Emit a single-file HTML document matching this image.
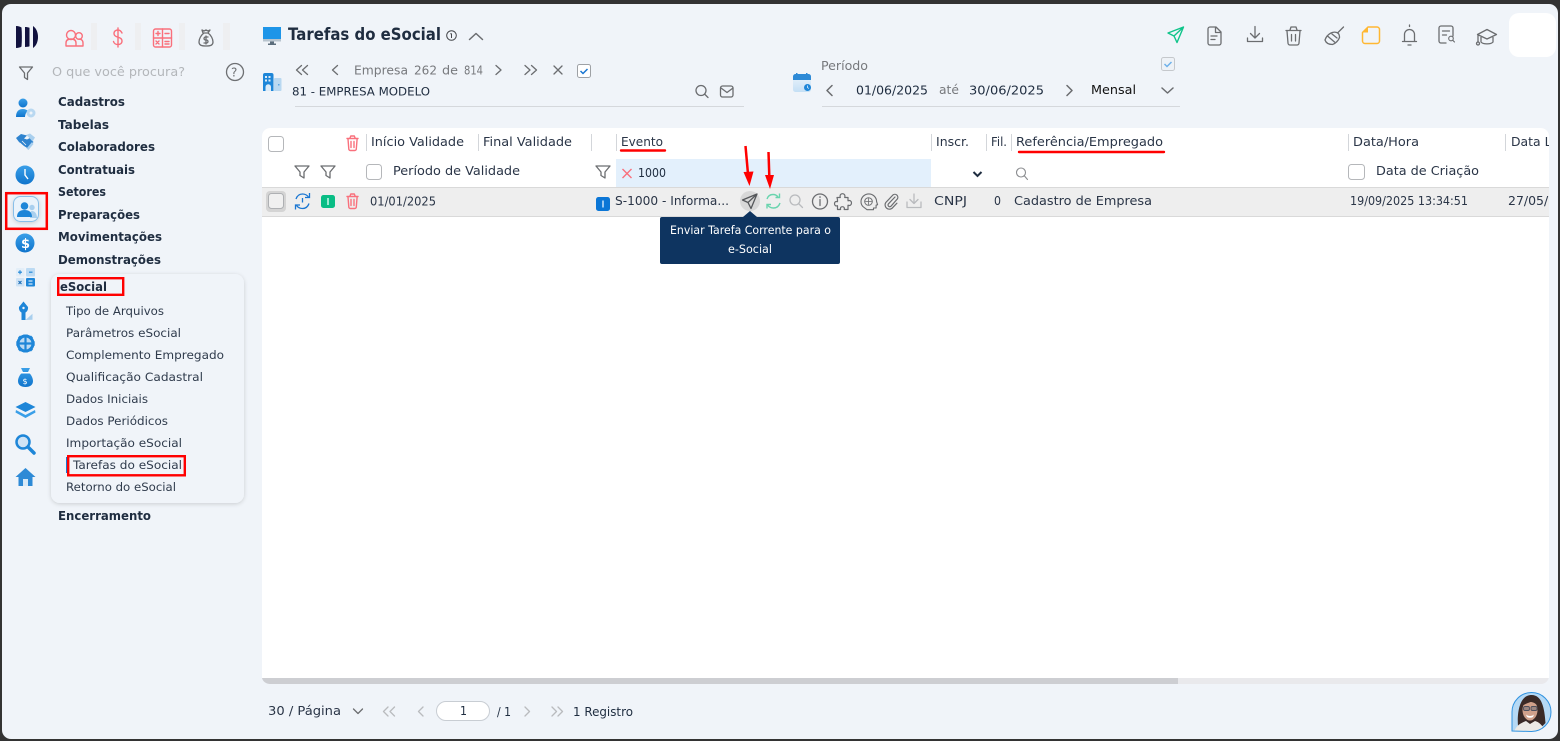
<!DOCTYPE html>
<html lang="pt-BR"><head><meta charset="utf-8"><title>Tarefas do eSocial</title>
<style>
html,body{margin:0;padding:0;background:#333;width:1560px;height:741px;overflow:hidden}
svg{display:block}
text{font-family:"DejaVu Sans","Liberation Sans",sans-serif;font-size:12px;fill:#2a3547;white-space:pre}
.b{font-weight:bold;font-size:12.5px;fill:#1f2d40}
.s{font-size:11.5px;fill:#2f3b4c}
.g{fill:#77797d}
.ln{fill:none;stroke:#6b6d70;stroke-width:1.3;stroke-linecap:round;stroke-linejoin:round}
.lt{fill:none;stroke:#b9bbbe;stroke-width:1.3;stroke-linecap:round;stroke-linejoin:round}
.pk{fill:none;stroke:#f9707c;stroke-width:1.4;stroke-linecap:round;stroke-linejoin:round}
.sep{stroke:#d3d6da;stroke-width:1}
.cb{fill:#fff;stroke:#b5b7ba;stroke-width:1}
</style></head><body>
<svg width="1560" height="741" viewBox="0 0 1560 741" xmlns="http://www.w3.org/2000/svg">
<defs>
<linearGradient id="bl" x1="0" y1="0" x2="0" y2="1"><stop offset="0" stop-color="#3a9fe8"/><stop offset="1" stop-color="#0f74cc"/></linearGradient>
<linearGradient id="lb" x1="0" y1="0" x2="0" y2="1"><stop offset="0" stop-color="#eef5fb"/><stop offset="1" stop-color="#c4dff5"/></linearGradient>
<clipPath id="av"><path d="M1512 731V712a19.500 19.500 0 1 1 19.500 19.500z"/></clipPath>
<filter id="sh" x="-20%" y="-20%" width="140%" height="140%"><feDropShadow dx="0" dy="1" stdDeviation="2" flood-color="#000" flood-opacity=".16"/></filter>
</defs>
<rect width="1560" height="741" fill="#333"/>
<rect x="2" y="4" width="1556" height="735" rx="9" fill="#f0f4f9"/>

<!-- logo -->
<g fill="#12123f"><path d="M16 26c2.500 0 4.500 .8 5.500 1.500 .5 6 .5 13 0 19-1 .8-3 1.500-5.500 1.500z"/><path d="M25 27c1.800 0 3.500 .3 4.500 .8v18.500c-1 .5-2.700 .7-4.500 .7z"/><path d="M33 26c3 2 5 6 5 11s-2 9-5 11z"/></g>
<!-- top tabs -->
<g fill="#eeeff1"><rect x="91" y="23" width="6" height="27"/><rect x="135" y="23" width="6" height="27"/><rect x="179" y="23" width="6" height="27"/><rect x="223" y="23" width="7" height="27"/></g>
<g class="pk"><circle cx="71" cy="35" r="4.500"/><circle cx="79" cy="36" r="3.300"/><path d="M66 46v-3c0-3 2-4 5-4s5 1 5 4v3zM76 46h7v-3c0-3-2-4-4-4"/>
<path d="M122 33c-1-2-2-3-4-3s-4 1-4 3.500 2 3.200 4 3.700 4 1.300 4 3.800-2 3.500-4 3.500-4-1-4.500-3M118 28v19"/>
<rect x="153.500" y="29" width="18" height="18" rx="2"/><path d="M162.500 29v18M153.500 38h18M156 33.500h4M158 31.500v4M165 33.500h4M156 41l3 3M159 41l-3 3M165 41.500h4M165 44h4"/></g>
<g class="ln"><path d="M204 33c-3 2-5 6-5 9 0 3 2 4 7 4s7-1 7-4c0-3-2-7-5-9zM203 33l-1-3 2 1 2-1 2 1 2-1-2 3M206 36v8M204 43h2.500a1.500 1.500 0 0 0 0-3h-1a1.500 1.500 0 0 1 0-3h2.500"/></g>

<!-- search row -->
<path class="ln" d="M19.500 67h13l-5 6v6.500l-3-2v-4.500z"/>
<text x="52" y="76" style="fill:#b3b6ba" textLength="133" lengthAdjust="spacingAndGlyphs">O que você procura?</text>
<circle cx="235" cy="72" r="8.500" fill="none" stroke="#6e7073" stroke-width="1.300"/>
<text x="231" y="76.500" style="font-size:12px;fill:#6e7073">?</text>

<!-- sidebar icons -->
<circle cx="23" cy="103" r="4.500" fill="url(#bl)"/><path d="M16 117c0-6 3-8 7-8 2 0 4 1 5 2-2 1-3 4-3 6z" fill="url(#bl)"/><circle cx="31" cy="113" r="4.500" fill="#b9d8f1"/><circle cx="31" cy="113" r="1.500" fill="#f0f4f9"/>
<!-- handshake -->
<path d="M16 138l5-4 6 1.500-3 3 3 1 3-1.500 3.500 4-5.500 6.500-4-2.500-5-4z" fill="#2e83cf"/><path d="M26 135l4-1.500 5 4-2.500 4-4-4.500z" fill="#a9cfee"/><path d="M32 142l-5.500 6.500 2 1.500 5-6z" fill="#a9cfee"/><path d="M22 141l4 4M20 143l4 4" stroke="#f0f4f9" stroke-width=".8"/>
<circle cx="25" cy="175" r="9.500" fill="url(#bl)"/><path d="M25 169v6l3 4" stroke="#fff" stroke-width="1.400" fill="none"/>
<rect x="13.500" y="196.500" width="25" height="25" rx="7" fill="#eaf3fb" stroke="#88bfe9" filter="url(#sh)"/>
<circle cx="32" cy="207.500" r="2.700" fill="#a9cfee"/><path d="M30 218c0-4 0-7 2-7 3 0 5 3 5 7z" fill="#a9cfee"/><circle cx="24.500" cy="206" r="3.800" fill="#1e86d8"/><path d="M17 217c0-5 3-7 7.500-7s7.500 2 7.500 7z" fill="#1e86d8"/>
<circle cx="25" cy="243" r="9.500" fill="url(#bl)"/><text x="21" y="248" style="font-size:13px;font-weight:bold;fill:#fff">$</text>
<!-- calc -->
<g><rect x="16" y="268" width="8.500" height="8.500" rx="1" fill="#e3eef8"/><rect x="26" y="268" width="9" height="8.500" rx="1" fill="#bcdaf3"/><rect x="16" y="278" width="8.500" height="8.500" rx="1" fill="#cfe3f5"/><rect x="26" y="278" width="9" height="8.500" rx="1" fill="#1e86d8"/><path d="M18 272.200h4M20 270.200v4M29 272.200h3.500" stroke="#1e86d8" stroke-width="1.100"/><path d="M28.500 281h4M28.500 284h4" stroke="#fff" stroke-width="1.100"/><path d="M18.500 281l3 3M21.500 281l-3 3" stroke="#1e6fb8" stroke-width="1.100"/></g>
<!-- key -->
<g><path d="M19 307l4.500-5.500 4.500 5.500c.5 3-1.500 5-2.500 5.500v7.500h-4v-7.500c-1-.5-3-2.500-2.500-5.500z" fill="#1e86d8"/><circle cx="23.500" cy="308" r="1.200" fill="#f0f4f9"/><path d="M25.500 320l7-.2v-6z" fill="#a9cfee"/></g>
<!-- gear -->
<g fill="#1e86d8"><circle cx="25.500" cy="343.500" r="7.500" fill="#bcdaf3" stroke="#1e86d8" stroke-width="3"/><path d="M25.500 335v17M17 343.500h17" stroke="#1e86d8" stroke-width="2.200" fill="none"/><rect x="23.300" y="334.500" width="4.400" height="3"/><rect x="23.300" y="349.500" width="4.400" height="3"/><rect x="16.300" y="341.300" width="3" height="4.400"/><rect x="31.700" y="341.300" width="3" height="4.400"/><path d="M18 337.500l2-2 3 2-3 3zM33 337.500l-2-2-3 2 3 3zM18 349.500l2 2 3-2-3-3zM33 349.500l-2 2-3-2 3-3z"/></g>
<path d="M21 368h9l-2 4c3 2 5 6 5 9 0 4-3 6-7.500 6s-7.500-2-7.500-6c0-3 2-7 5-9z" fill="url(#bl)"/><rect x="21" y="372" width="9" height="1.500" fill="#fff"/><text x="22.500" y="384" style="font-size:8px;fill:#fff">$</text>
<path d="M25.500 402l10 5-10 5-10-5z" fill="#1e86d8"/><path d="M16 410l9.500 5 9.500-5 0.500 2.500-10 5.500-10-5.500z" fill="#3a9fe8"/>
<circle cx="23" cy="442" r="6.500" fill="#cfe3f5" stroke="#1e86d8" stroke-width="2.500"/><path d="M28 447l6 6" stroke="#1e86d8" stroke-width="3.500" stroke-linecap="round"/>
<path d="M25.500 468l10 9h-3v9h-14v-9h-3z" fill="#2e8ad6"/><rect x="23" y="479" width="5" height="7" fill="#d8e9f7"/>

<!-- red box sidebar -->
<rect x="6.200" y="193.200" width="40.600" height="35.600" fill="none" stroke="#f00" stroke-width="2.500"/>

<!-- menu -->
<text class="b" x="58" y="106" textLength="67" lengthAdjust="spacingAndGlyphs">Cadastros</text>
<text class="b" x="58" y="129" textLength="51" lengthAdjust="spacingAndGlyphs">Tabelas</text>
<text class="b" x="58" y="151" textLength="97" lengthAdjust="spacingAndGlyphs">Colaboradores</text>
<text class="b" x="58" y="174" textLength="77" lengthAdjust="spacingAndGlyphs">Contratuais</text>
<text class="b" x="58" y="196" textLength="48" lengthAdjust="spacingAndGlyphs">Setores</text>
<text class="b" x="58" y="219" textLength="82" lengthAdjust="spacingAndGlyphs">Preparações</text>
<text class="b" x="58" y="241" textLength="104" lengthAdjust="spacingAndGlyphs">Movimentações</text>
<text class="b" x="58" y="264" textLength="103" lengthAdjust="spacingAndGlyphs">Demonstrações</text>
<rect x="51" y="274" width="193" height="229" rx="9" fill="#f0f4f9" filter="url(#sh)"/>
<text class="b" x="60" y="291" textLength="47" lengthAdjust="spacingAndGlyphs">eSocial</text>
<rect x="58.200" y="278.200" width="65" height="16.600" fill="none" stroke="#f00" stroke-width="2.400"/>
<text class="s" x="66" y="315" textLength="98" lengthAdjust="spacingAndGlyphs">Tipo de Arquivos</text>
<text class="s" x="66" y="337" textLength="115" lengthAdjust="spacingAndGlyphs">Parâmetros eSocial</text>
<text class="s" x="66" y="359" textLength="158" lengthAdjust="spacingAndGlyphs">Complemento Empregado</text>
<text class="s" x="66" y="381" textLength="137" lengthAdjust="spacingAndGlyphs">Qualificação Cadastral</text>
<text class="s" x="66" y="403" textLength="82" lengthAdjust="spacingAndGlyphs">Dados Iniciais</text>
<text class="s" x="66" y="425" textLength="102" lengthAdjust="spacingAndGlyphs">Dados Periódicos</text>
<text class="s" x="66" y="447" textLength="116" lengthAdjust="spacingAndGlyphs">Importação eSocial</text>
<rect x="66" y="457" width="2" height="16" fill="#1976d2"/>
<text class="s" x="73" y="469" textLength="109" lengthAdjust="spacingAndGlyphs">Tarefas do eSocial</text>
<rect x="68.200" y="456.200" width="116.600" height="19.100" fill="none" stroke="#f00" stroke-width="2.400"/>
<text class="s" x="66" y="491" textLength="110" lengthAdjust="spacingAndGlyphs">Retorno do eSocial</text>
<text class="b" x="58" y="520" textLength="93" lengthAdjust="spacingAndGlyphs">Encerramento</text>

<!-- title -->
<rect x="263" y="27" width="18" height="12" fill="#1e95e8"/><rect x="263" y="39" width="18" height="2.500" fill="#b8c4ce"/><path d="M270 41.500h4v2h2v1.500h-8v-1.500h2z" fill="#5b6d7c"/>
<text x="288" y="40" style="font-size:16.500px;font-weight:bold;fill:#1f2d40" textLength="153" lengthAdjust="spacingAndGlyphs">Tarefas do eSocial</text>
<circle cx="451.500" cy="35.500" r="4.800" fill="none" stroke="#44464a" stroke-width="1"/><path d="M451.500 33.500v4.500M450.300 33.700h1.200" stroke="#44464a" fill="none"/>
<path class="ln" d="M469.500 39.500l6.500-6 6.500 6" style="stroke-width:1.500"/>

<!-- empresa nav -->
<path d="M263 75a2 2 0 0 1 2-2h6.500a2 2 0 0 1 2 2v16h-10.500z" fill="#1e86d8"/><rect x="274" y="78" width="7.500" height="13" rx="1" fill="#b9d8f1"/><rect x="278" y="84" width="1.500" height="1.500" fill="#5aa6e3"/><path d="M265 76h2v2h-2zM268.500 76h2v2h-2zM265 79.500h2v2h-2zM268.500 79.500h2v2h-2z" fill="#dcebf8"/><path d="M265.500 91v-4a2.700 2.700 0 0 1 5.500 0v4z" fill="#dcebf8"/>
<g class="ln"><path d="M301.500 65.500l-5 4.500 5 4.500M307.500 65.500l-5 4.500 5 4.500M337.500 65.500l-5 4.500 5 4.500M496 65.500l5 4.500-5 4.500M525 65.500l5 4.500-5 4.500M531.500 65.500l5 4.500-5 4.500M554 66l8 8M562 66l-8 8"/></g>
<text class="g" x="354" y="74.500" textLength="54" lengthAdjust="spacingAndGlyphs">Empresa</text>
<text class="g" x="414" y="74.500" textLength="23" lengthAdjust="spacingAndGlyphs">262</text>
<text class="g" x="442" y="74.500" textLength="16" lengthAdjust="spacingAndGlyphs">de</text>
<text class="g" x="464" y="74.500" textLength="19" lengthAdjust="spacingAndGlyphs">814</text>
<rect x="577.500" y="64.500" width="13" height="13" rx="2" fill="#fff" stroke="#9ea1a5"/><path d="M580.500 71l2.500 2.500 4.500-4.500" fill="none" stroke="#1976d2" stroke-width="1.500"/>
<text x="292" y="95.500" style="font-size:11.500px;fill:#1f2d40" textLength="138" lengthAdjust="spacingAndGlyphs">81 - EMPRESA MODELO</text>
<g class="ln"><circle cx="701" cy="90.500" r="5"/><path d="M705 94.500l3 3"/><rect x="720.500" y="86" width="12.500" height="11" rx="2"/><path d="M721 88l6 4.500 6-4.500"/></g>
<path d="M295 106.500h449" stroke="#d5d8dc"/>

<!-- periodo -->
<rect x="793" y="74" width="18" height="18" rx="2.500" fill="url(#lb)"/><path d="M793 80v-3.500a2.500 2.500 0 0 1 2.500-2.500h13a2.500 2.500 0 0 1 2.500 2.500V80z" fill="#2e8ad6"/><rect x="796" y="73" width="1.500" height="3" fill="#2e8ad6"/><rect x="806" y="73" width="1.500" height="3" fill="#2e8ad6"/><circle cx="807.500" cy="87.500" r="3.500" fill="#1e86d8"/><path d="M807.500 85.500v2l1.300 1" stroke="#fff" stroke-width=".7" fill="none"/>
<text class="g" x="821" y="70" textLength="47" lengthAdjust="spacingAndGlyphs">Período</text>
<rect x="1161.500" y="57.500" width="13" height="13" rx="2" fill="#eef2f7" stroke="#c5c8cc"/><path d="M1164.500 64l2.500 2.500 4.500-4.500" fill="none" stroke="#6fb1ea" stroke-width="1.500"/>
<g class="ln" style="stroke-width:1.500"><path d="M832 85.500l-5 5 5 5M1067 85.500l5 5-5 5M1162 88l5.500 5 5.500-5"/></g>
<text x="856" y="94.500" style="fill:#1f2d40" textLength="72" lengthAdjust="spacingAndGlyphs">01/06/2025</text>
<text class="g" x="939" y="94" textLength="20" lengthAdjust="spacingAndGlyphs">até</text>
<text x="969" y="94.500" style="fill:#1f2d40" textLength="75" lengthAdjust="spacingAndGlyphs">30/06/2025</text>
<text x="1091" y="94" style="fill:#111;font-size:12px" textLength="45" lengthAdjust="spacingAndGlyphs">Mensal</text>
<path d="M822 106.500h358" stroke="#d5d8dc"/>

<!-- top right icons -->
<g fill="none" stroke="#0fc48a" stroke-width="1.400" stroke-linejoin="round"><path d="M1183.500 27l-15.500 6 6 3 3 6.500zM1174 36l9.500-9"/></g>
<g class="ln"><path d="M1210 27h6l5 5v11a2 2 0 0 1-2 2h-9a2 2 0 0 1-2-2v-14a2 2 0 0 1 2-2zM1215.500 27v5.500h5.500M1211 36h6M1211 39.500h4"/>
<path d="M1255 26.500v11M1250.500 33.500l4.500 4.500 4.500-4.500M1247.500 38v3.500h15V38"/>
<path d="M1287 31l1 12a2 2 0 0 0 2 2h7a2 2 0 0 0 2-2l1-12M1286 30.500h15M1290 30l1-3h5l1 3M1291.500 34.500v6.500M1295.500 34.500v6.500"/>
<path d="M1343.500 27l-6 6M1338 33c-3-1.500-5-1-7 0-3 1.500-5 4-6 7 1 3 4 4.500 7.500 4.500 3-1 6-4 7-7 0-2-.5-3.500-1.500-4.500zM1327.500 36l7 6M1332 34l5 4"/>
<path d="M1409.500 25v1.500M1404.500 41v-6.500a5 5 0 0 1 10 0v6.500M1402.500 41.500h14M1408 45h3"/>
<path d="M1453 36v-8a2 2 0 0 0-2-2h-10a2 2 0 0 0-2 2v13a2 2 0 0 0 2 2h5M1442.500 31h7M1442.500 35h4"/></g>
<g class="ln" style="stroke-width:1.100"><circle cx="1451" cy="38.500" r="2.300"/><path d="M1452.800 40.300l1.700 1.700"/></g>
<g fill="none" stroke="#ffb732" stroke-width="1.500" stroke-linejoin="round"><path d="M1368 27h9a2.500 2.500 0 0 1 2.500 2.500v11.500a2.500 2.500 0 0 1-2.500 2.500h-12a2.500 2.500 0 0 1-2.500-2.500V32.500z"/></g><path d="M1363 32.500l5-5v5z" fill="#ffb732"/>
<g class="ln"><path d="M1477.500 34.500l9.500-5 9.500 5-9.500 4.500zM1481 37v5c2 2.500 10 2.500 12 0v-5M1478 35v7"/><circle cx="1478" cy="43.500" r="1.500"/></g>
<rect x="1509" y="13" width="47" height="44" rx="10" fill="#fff"/>

<!-- table card -->
<rect x="262" y="128" width="1287" height="556" rx="8" fill="#e9e9ec"/>
<path d="M262 136a8 8 0 0 1 8-8h1271a8 8 0 0 1 8 8v542H262z" fill="#fff"/>
<path d="M262 678h916v6h-908a8 8 0 0 1-8-6z" fill="#cdced2"/>

<rect x="268.500" y="136.500" width="15" height="15" rx="3" class="cb"/>
<path class="pk" d="M348 139l.8 10a1.500 1.500 0 0 0 1.500 1.500h4.500a1.500 1.500 0 0 0 1.500-1.500l.8-10M347 138.500h11M350 138l.8-2h3.500l.8 2M351 141.500v6M354 141.500v6"/>
<g class="sep"><path d="M366.500 134v17M478.500 134v17M591.500 134v17M616.500 134v17M931.500 134v17M986.500 134v17M1011.500 134v17M1348.500 134v17M1505.500 134v17"/></g>
<text x="371" y="146" textLength="93" lengthAdjust="spacingAndGlyphs">Início Validade</text>
<text x="483" y="146" textLength="89" lengthAdjust="spacingAndGlyphs">Final Validade</text>
<text x="621" y="146" textLength="42" lengthAdjust="spacingAndGlyphs">Evento</text>
<text x="936" y="146" textLength="33" lengthAdjust="spacingAndGlyphs">Inscr.</text>
<text x="991" y="146" textLength="16" lengthAdjust="spacingAndGlyphs">Fil.</text>
<text x="1016" y="146" textLength="147" lengthAdjust="spacingAndGlyphs">Referência/Empregado</text>
<text x="1353" y="146" textLength="66" lengthAdjust="spacingAndGlyphs">Data/Hora</text>
<svg x="1505" y="130" width="44" height="30" overflow="hidden"><text x="6" y="16" textLength="72" lengthAdjust="spacingAndGlyphs">Data Limite</text></svg>

<!-- filter row -->
<rect x="616" y="159" width="315" height="28" fill="#e3f0fc"/>
<g class="ln"><path d="M295 166h14l-5 6v6l-4-2.500V172zM321 166h14l-5 6v6l-4-2.500V172zM596 166h14l-5 6v6l-4-2.500V172z"/></g>
<rect x="366.500" y="164.500" width="15" height="15" rx="3" class="cb"/>
<text x="393" y="175" textLength="127" lengthAdjust="spacingAndGlyphs">Período de Validade</text>
<path d="M622.500 169l9 9M631.500 169l-9 9" stroke="#f9707c" stroke-width="1.400" fill="none"/>
<text x="638" y="177" style="fill:#1f2d40" textLength="28" lengthAdjust="spacingAndGlyphs">1000</text>
<path d="M973.500 172l4 4 4-4" fill="none" stroke="#1f2d40" stroke-width="2"/>
<g class="ln" style="stroke:#8b8d90;stroke-width:1.100"><circle cx="1021" cy="172.500" r="4.500"/><path d="M1024.500 176l3 3.500"/></g>
<rect x="1348.500" y="164.500" width="16" height="15" rx="3" class="cb"/>
<text x="1376" y="175" textLength="103" lengthAdjust="spacingAndGlyphs">Data de Criação</text>

<!-- row -->
<rect x="262" y="187" width="1287" height="30" fill="#eee"/><path d="M262 187.500h1287M262 216.500h1287" stroke="#d9d9d9"/>
<rect x="266" y="191" width="20" height="21" rx="4" fill="#d4d4d4"/><rect x="268.500" y="193.500" width="15" height="15" rx="3" fill="#f0f0f0" stroke="#aeb0b3"/>
<g fill="none" stroke="#1976d2" stroke-width="1.300"><path d="M296 199c1-3 3-5 6.500-5 2.500 0 4.500 1 6 3M309 203.500c-1 3-3 5-6.500 5-2.500 0-4.500-1-6-3"/><path d="M309.500 193v4.500h-4.500M295.500 209.500V205h4.500M302.500 198v4.500"/></g>
<rect x="321" y="195" width="14" height="13" rx="2.500" fill="#09bd85"/><rect x="327.300" y="198" width="1.400" height="7" fill="#d9fff2"/>
<path class="pk" d="M348 197l.8 10a1.500 1.500 0 0 0 1.500 1.500h4.500a1.500 1.500 0 0 0 1.500-1.500l.8-10M347 196.500h11M350 196l.8-2h3.500l.8 2M351 199.500v6M354 199.500v6"/>
<text x="370" y="205.500" style="fill:#2a3547" textLength="66" lengthAdjust="spacingAndGlyphs">01/01/2025</text>
<rect x="596" y="197" width="14" height="14" rx="2.500" fill="#0b76d6"/><rect x="602.300" y="200.500" width="1.400" height="7" fill="#d7ecff"/>
<text x="615" y="205" textLength="114" lengthAdjust="spacingAndGlyphs">S-1000 - Informa...</text>
<circle cx="750" cy="201" r="10" fill="#d8d8d8"/>
<path d="M757 194l-14.500 6 5.500 2.500 3 6zM748 202.500l9-8.500" fill="none" stroke="#55575a" stroke-width="1.300" stroke-linejoin="round"/>
<g fill="none" stroke="#69d4ae" stroke-width="1.400"><path d="M767 199c1-3 3-4.500 6-4.500 2 0 4 1 5 2.500M780 203c-1 3-3 5-6.500 5-2.500 0-4.500-1-6-3"/><path d="M779.500 193.500v4h-4M767 208.500v-4h4"/></g>
<g class="lt"><circle cx="795" cy="200" r="5"/><path d="M799 204l3.500 3.500"/></g>
<g class="ln"><circle cx="820" cy="201.500" r="7.500"/><path d="M820 199.500v6M820 196.800v.6"/>
<!-- puzzle -->
<path d="M837 197.500h3.300c-.8-2 .3-3.800 2.200-3.800s3 1.800 2.200 3.800h3.300v3.300c2-.8 3.500.3 3.500 2.200s-1.500 3-3.500 2.200v4.300h-3.800c.6-1.600-.3-2.800-1.800-2.800s-2.400 1.200-1.800 2.800h-3.100v-3.800c-1.700.7-3-.3-3-2s1.300-2.700 3-2v-2z" style="stroke-width:1.200"/>
<!-- brain head -->
<path d="M863.500 207c-1.800-1.500-2.500-3.300-2.500-5.300a7.800 7.800 0 0 1 15.600 0l1 3-1.500.5v2.800h-2.600v1.700h-6.500z" style="stroke-width:1.100"/><circle cx="868.500" cy="201.500" r="3.800" style="stroke-width:1"/><path d="M865.500 201.500h6M868.500 198.500v6" style="stroke-width:.8"/>
<!-- clip -->
<path d="M895 197l-6.500 6.800a1.700 1.700 0 0 0 2.500 2.400l6.300-7.200a3 3 0 0 0-4.400-4l-7 7.400a4.300 4.300 0 0 0 6 6l5-5.200" style="stroke-width:1.200"/></g>
<g class="lt"><path d="M914 194v9M910 199.500l4 4 4-4M907 202v5.500h14V202"/></g>
<text x="934" y="205" textLength="33" lengthAdjust="spacingAndGlyphs">CNPJ</text>
<text x="994" y="205" textLength="7" lengthAdjust="spacingAndGlyphs">0</text>
<text x="1014" y="205" textLength="138" lengthAdjust="spacingAndGlyphs">Cadastro de Empresa</text>
<text x="1350" y="205" textLength="118" lengthAdjust="spacingAndGlyphs">19/09/2025 13:34:51</text>
<svg x="1505" y="190" width="44" height="24" overflow="hidden"><text x="3" y="15" textLength="72" lengthAdjust="spacingAndGlyphs">27/05/2025</text></svg>

<!-- tooltip -->
<path d="M662 217h81l7-6 7 6h81a2 2 0 0 1 2 2v43a2 2 0 0 1-2 2H662a2 2 0 0 1-2-2v-43a2 2 0 0 1 2-2z" fill="#0e3460"/>
<text x="670" y="234" style="fill:#fff;font-size:11.500px" textLength="161" lengthAdjust="spacingAndGlyphs">Enviar Tarefa Corrente para o</text>
<text x="728" y="253" style="fill:#fff;font-size:11.500px" textLength="44" lengthAdjust="spacingAndGlyphs">e-Social</text>

<!-- annotations -->
<path d="M621 150.500h44M1019 152h145" stroke="#f00" stroke-width="2.400" stroke-linecap="round" fill="none"/>
<path d="M745.500 146l2.500 28" stroke="#f00" stroke-width="2.500"/><path d="M743.500 172l10-.5-4 14.500z" fill="#f00"/>
<path d="M768.500 152l.8 24" stroke="#f00" stroke-width="2.500"/><path d="M765 175h9l-4 14z" fill="#f00"/>

<!-- pagination -->
<text x="268" y="715" style="fill:#2a3547" textLength="73" lengthAdjust="spacingAndGlyphs">30 / Página</text>
<path class="ln" d="M353.500 709l4.500 4.500 4.500-4.500"/>
<g class="lt"><path d="M388 707l-4.500 4.500 4.500 4.500M394.500 707l-4.500 4.500 4.500 4.500M423 707l-4.500 4.500 4.500 4.500M525 707l4.500 4.500-4.500 4.500M552 707l4.500 4.500-4.500 4.500M558 707l4.500 4.500-4.500 4.500"/></g>
<rect x="436.500" y="701.500" width="53" height="19" rx="9.500" fill="#fff" stroke="#c8cdd3"/>
<text x="460" y="715" style="fill:#1f2d40" textLength="7" lengthAdjust="spacingAndGlyphs">1</text>
<text x="497" y="716" style="fill:#1f2d40" textLength="14" lengthAdjust="spacingAndGlyphs">/ 1</text>
<text x="573" y="716" style="fill:#1f2d40" textLength="60" lengthAdjust="spacingAndGlyphs">1 Registro</text>

<!-- avatar -->
<g clip-path="url(#av)"><rect x="1510" y="690" width="44" height="44" fill="#b5d9f5"/>
<path d="M1518 726c-1-12 1-30 12.500-31 11-1 14 12 15 28l-3 3z" fill="#3a2a27"/>
<ellipse cx="1530" cy="710" rx="7.500" ry="10.500" fill="#cfa08a"/>
<path d="M1522.500 706c1-6 5-8 8-8s7 2 7.500 8c-3-3-5-4-7.500-4-2.500 1-6 2-8 4z" fill="#3a2a27"/>
<rect x="1523.500" y="706.500" width="6" height="4" rx="1.500" fill="#9a8580" stroke="#4d4f5c" stroke-width=".9"/><rect x="1531" y="706.500" width="6" height="4" rx="1.500" fill="#9a8580" stroke="#4d4f5c" stroke-width=".9"/>
<path d="M1526 714.500c2 2 6 2 8 0l-1 2.500c-2 1-4 1-6 0z" fill="#fff"/>
<path d="M1514 733c1-7 7-10 12-12l4 3 5-3c4 1 9 5 10 12z" fill="#eceae6"/></g>
<path d="M1512 731V712a19.500 19.500 0 1 1 19.500 19.500z" fill="none" stroke="#2f92e0" stroke-width="1"/>
</svg>
</body></html>
